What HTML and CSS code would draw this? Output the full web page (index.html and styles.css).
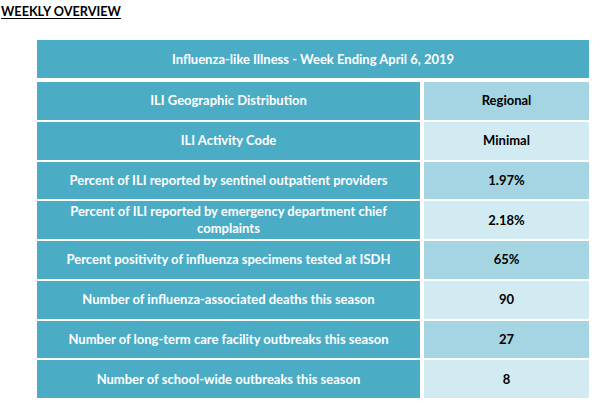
FILE: index.html
```html
<!DOCTYPE html>
<html>
<head>
<meta charset="utf-8">
<link rel="stylesheet" href="styles.css">
</head>
<body>
<div class="page">
  <h1 class="title">WEEKLY OVERVIEW</h1>
  <div class="table">
    <div class="head">Influenza-like Illness - Week Ending April 6, 2019</div>
    <div class="label">ILI Geographic Distribution</div>
    <div class="value dark">Regional</div>
    <div class="label">ILI Activity Code</div>
    <div class="value light">Minimal</div>
    <div class="label">Percent of ILI reported by sentinel outpatient providers</div>
    <div class="value dark">1.97%</div>
    <div class="label">Percent of ILI reported by emergency department chief complaints</div>
    <div class="value light">2.18%</div>
    <div class="label">Percent positivity of influenza specimens tested at ISDH</div>
    <div class="value dark">65%</div>
    <div class="label">Number of influenza-associated deaths this season</div>
    <div class="value light">90</div>
    <div class="label">Number of long-term care facility outbreaks this season</div>
    <div class="value dark">27</div>
    <div class="label">Number of school-wide outbreaks this season</div>
    <div class="value light">8</div>
  </div>
</div>
</body>
</html>
```
FILE: styles.css
```css
html, body {
  margin: 0;
  padding: 0;
  background: #ffffff;
}
.page {
  font-family: Lato, "Open Sans", sans-serif;
  font-weight: 700;
  padding: 4px 0 0 1px;
}
.title {
  margin: 0;
  font-size: 12.7px;
  line-height: 15px;
  font-weight: 700;
  color: #000;
  text-decoration: underline;
  text-underline-offset: 2px;
}
.table {
  margin: 21px 0 0 36px;
  display: grid;
  grid-template-columns: 383px 165px;
  grid-template-rows: 40px;
  grid-auto-rows: 37.75px;
  column-gap: 4px;
  row-gap: 2px;
  font-size: 13px;
  line-height: 17px;
}
.head {
  grid-column: 1 / 3;
  margin-bottom: 2px;
  background: #4bacc6;
  color: #fff;
  display: flex;
  align-items: center;
  justify-content: center;
}
.label {
  background: #4bacc6;
  color: #fff;
  display: flex;
  align-items: center;
  justify-content: center;
  text-align: center;
  padding: 0 20px;
}
.value {
  color: #000;
  display: flex;
  align-items: center;
  justify-content: center;
}
.dark { background: #a5d5e2; }
.light { background: #d2eaf1; }
```
